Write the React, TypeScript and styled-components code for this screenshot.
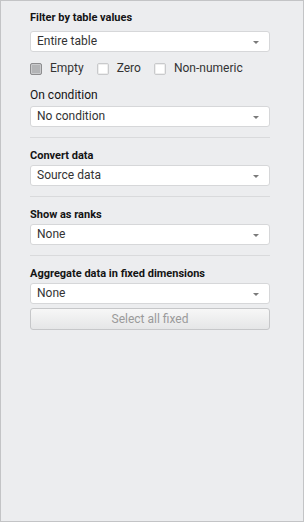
import styled, { createGlobalStyle } from 'styled-components';

const GlobalStyle = createGlobalStyle`
  html, body {
    margin: 0;
    padding: 0;
    background: #ffffff;
  }
  body {
    font-family: Roboto, "Liberation Sans", Arial, sans-serif;
    color: #222;
  }
`;

const Panel = styled.div`
  box-sizing: border-box;
  width: 304px;
  height: 522px;
  border: 1px solid #c3c4c6;
  background: #ecedef;
  padding: 9px 33px 0 29px;
  display: flex;
  flex-direction: column;
`;

const Section = styled.section<{ $first?: boolean }>`
  display: flex;
  flex-direction: column;
  padding-top: ${(p) => (p.$first ? '0' : '10px')};
`;

const Title = styled.div<{ $bold?: boolean; $gap?: number }>`
  font-size: ${(p) => (p.$bold ? '11px' : '12px')};
  font-weight: ${(p) => (p.$bold ? 700 : 400)};
  line-height: 16px;
  height: 16px;
  color: #141414;
  margin-bottom: ${(p) => p.$gap ?? 1}px;
  white-space: nowrap;
`;

const Select = styled.div`
  box-sizing: border-box;
  height: 21px;
  background: #ffffff;
  border: 1px solid #d6d7d9;
  border-radius: 3px;
  display: flex;
  align-items: center;
  padding: 0 10px 0 6px;
  font-size: 12px;
  color: #333;
`;

const SelectText = styled.span`
  flex: 1;
  line-height: 19px;
`;

const Arrow = styled.span`
  width: 0;
  height: 0;
  border-left: 3px solid transparent;
  border-right: 3px solid transparent;
  border-top: 3px solid #7a7a7a;
  margin-top: 1px;
`;

const CheckRow = styled.div`
  display: flex;
  align-items: center;
  gap: 13px;
  margin-top: 10px;
  margin-bottom: 12px;
  height: 13px;
`;

const CheckItem = styled.label`
  display: flex;
  align-items: center;
  gap: 8px;
  font-size: 12px;
  color: #333;
  line-height: 13px;
`;

const Box = styled.span<{ $on?: boolean }>`
  box-sizing: border-box;
  width: 12px;
  height: 12px;
  border-radius: 2px;
  border: 1px solid ${(p) => (p.$on ? '#8d8d8f' : '#c9cacc')};
  background: ${(p) => (p.$on ? '#b3b4b6' : '#ffffff')};
  box-shadow: inset 0 0 0 1px ${(p) => (p.$on ? '#c9cacc' : '#eeeeee')};
`;

const Divider = styled.hr`
  border: none;
  height: 1px;
  width: 100%;
  background: #d9dadc;
  margin: 10px 0 0;
`;

const Button = styled.button`
  box-sizing: border-box;
  height: 22px;
  margin-top: 4px;
  width: 100%;
  border: 1px solid #c6c7c9;
  border-radius: 3px;
  background: linear-gradient(#f7f7f7, #e5e6e7);
  color: #9a9a9a;
  font-family: Roboto, "Liberation Sans", Arial, sans-serif;
  font-size: 12px;
  padding: 0;
`;

const Dropdown = ({ value }: { value: string }) => (
  <Select>
    <SelectText>{value}</SelectText>
    <Arrow />
  </Select>
);

export default function App() {
  return (
    <>
      <GlobalStyle />
      <Panel>
        <Section $first>
          <Title $bold $gap={5}>Filter by table values</Title>
          <Dropdown value="Entire table" />
          <CheckRow>
            <CheckItem>
              <Box $on />
              Empty
            </CheckItem>
            <CheckItem>
              <Box />
              Zero
            </CheckItem>
            <CheckItem>
              <Box />
              Non-numeric
            </CheckItem>
          </CheckRow>
          <Title $gap={3}>On condition</Title>
          <Dropdown value="No condition" />
          <Divider />
        </Section>

        <Section>
          <Title $bold>Convert data</Title>
          <Dropdown value="Source data" />
          <Divider />
        </Section>

        <Section>
          <Title $bold>Show as ranks</Title>
          <Dropdown value="None" />
          <Divider />
        </Section>

        <Section>
          <Title $bold>Aggregate data in fixed dimensions</Title>
          <Dropdown value="None" />
          <Button type="button">Select all fixed</Button>
        </Section>
      </Panel>
    </>
  );
}
